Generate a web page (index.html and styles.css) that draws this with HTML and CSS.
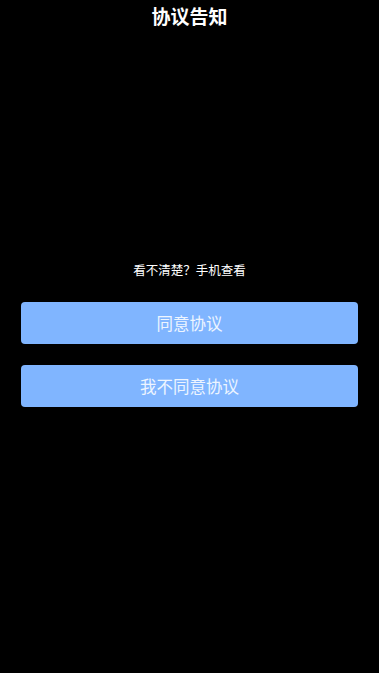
FILE: index.html
```html
<!DOCTYPE html>
<html lang="zh">
<head>
<meta charset="utf-8">
<link rel="stylesheet" href="styles.css">
</head>
<body>
<div class="page">
  <div class="title">协议告知</div>
  <div class="hint">看不清楚？手机查看</div>
  <div class="actions">
    <div class="btn">同意协议</div>
    <div class="btn">我不同意协议</div>
  </div>
</div>
</body>
</html>
```
FILE: styles.css
```css
html, body {
  margin: 0;
  padding: 0;
  background: #000;
}
.page {
  width: 379px;
  height: 673px;
  font-family: "Noto Sans CJK SC", "Noto Sans", sans-serif;
  color: #fff;
  display: flex;
  flex-direction: column;
}
.title {
  font-size: 19px;
  font-weight: 700;
  line-height: 32px;
  text-align: center;
}
.hint {
  margin-top: 229px;
  font-size: 12.5px;
  line-height: 18px;
  text-align: center;
}
.actions {
  margin: 23px 21px 0;
  display: flex;
  flex-direction: column;
  gap: 21px;
}
.btn {
  height: 42px;
  border-radius: 4px;
  background: #80b5ff;
  color: #eef5ff;
  font-size: 16.5px;
  display: flex;
  align-items: center;
  justify-content: center;
}
```
